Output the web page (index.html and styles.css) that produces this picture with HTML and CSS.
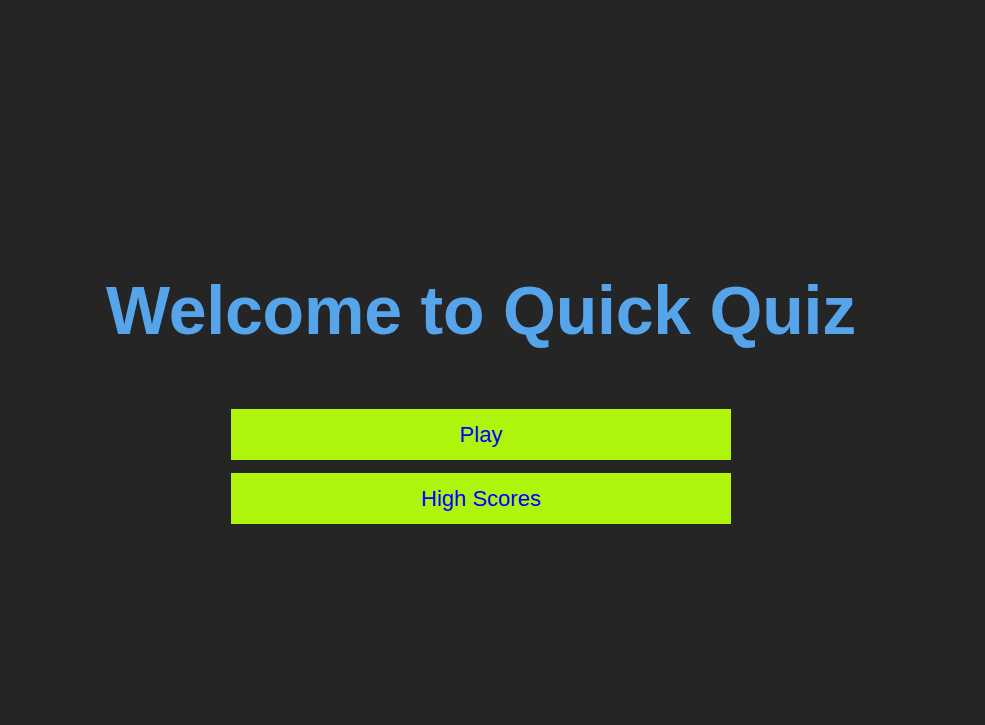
FILE: index.html
```html
<!DOCTYPE html>
<html lang="en">
<head>
<meta charset="utf-8">
<title>Quick Quiz</title>
<link rel="stylesheet" href="styles.css">
</head>
<body>
<main class="home">
  <h1 class="title">Welcome to Quick Quiz</h1>
  <div class="actions">
    <a class="btn" href="#">Play</a>
    <a class="btn" href="#">High Scores</a>
  </div>
</main>
</body>
</html>
```
FILE: styles.css
```css
html, body {
  margin: 0;
  padding: 0;
  background: #262526;
  height: 100%;
}
body {
  font-family: "Liberation Sans", Arial, sans-serif;
  overflow: hidden;
}
.home {
  width: 962px;
  padding-top: 271px;
  display: flex;
  flex-direction: column;
  align-items: center;
}
.title {
  margin: 0;
  font-size: 68px;
  font-weight: 700;
  line-height: 78px;
  letter-spacing: -0.2px;
  color: #56a5eb;
  text-align: center;
}
.actions {
  margin-top: 60px;
  display: flex;
  flex-direction: column;
  gap: 13px;
}
.btn {
  display: flex;
  align-items: center;
  justify-content: center;
  width: 500px;
  height: 51px;
  background: #aff40b;
  color: #0000ff;
  font-size: 22px;
  text-decoration: none;
}
```
